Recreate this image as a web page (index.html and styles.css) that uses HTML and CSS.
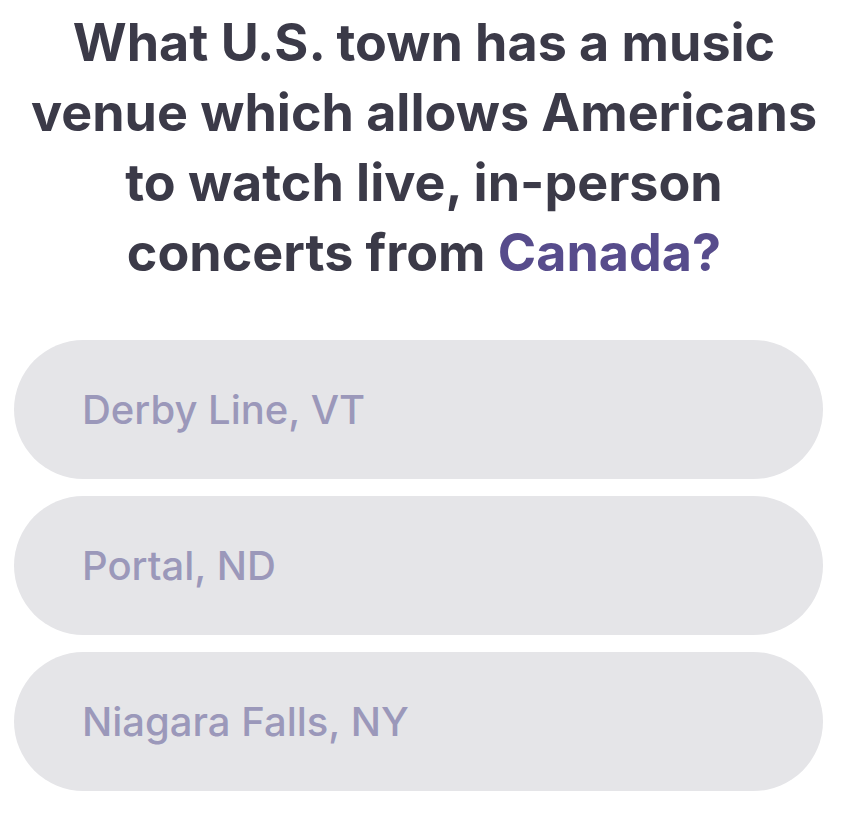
FILE: index.html
```html
<!DOCTYPE html>
<html>
<head>
<meta charset="utf-8">
<link rel="stylesheet" href="styles.css">
</head>
<body>
<div class="quiz">
  <h1 class="question">What U.S. town has a music<br>venue which allows Americans<br>to watch live, in-person<br>concerts from <span class="accent">Canada?</span></h1>
  <div class="options">
    <div class="option">Derby Line, VT</div>
    <div class="option">Portal, ND</div>
    <div class="option">Niagara Falls, NY</div>
  </div>
</div>
</body>
</html>
```
FILE: styles.css
```css
html, body {
  margin: 0;
  padding: 0;
  background: #ffffff;
}
.quiz {
  width: 848px;
  height: 818px;
  box-sizing: border-box;
  padding-top: 8px;
  font-family: "Inter", "Lato", sans-serif;
}
.question {
  margin: 0 auto;
  width: 840px;
  text-align: center;
  font-size: 52px;
  line-height: 70px;
  font-weight: 700;
  color: #3b3a48;
  letter-spacing: 0;
}
.accent {
  color: #574c8c;
}
.options {
  margin-top: 52px;
  margin-left: 14px;
  width: 809px;
  display: flex;
  flex-direction: column;
  gap: 17px;
}
.option {
  height: 139px;
  border-radius: 70px;
  background: #e5e5e8;
  display: flex;
  align-items: center;
  padding-left: 68px;
  font-size: 40px;
  font-weight: 500;
  color: #9b98ba;
}
```
